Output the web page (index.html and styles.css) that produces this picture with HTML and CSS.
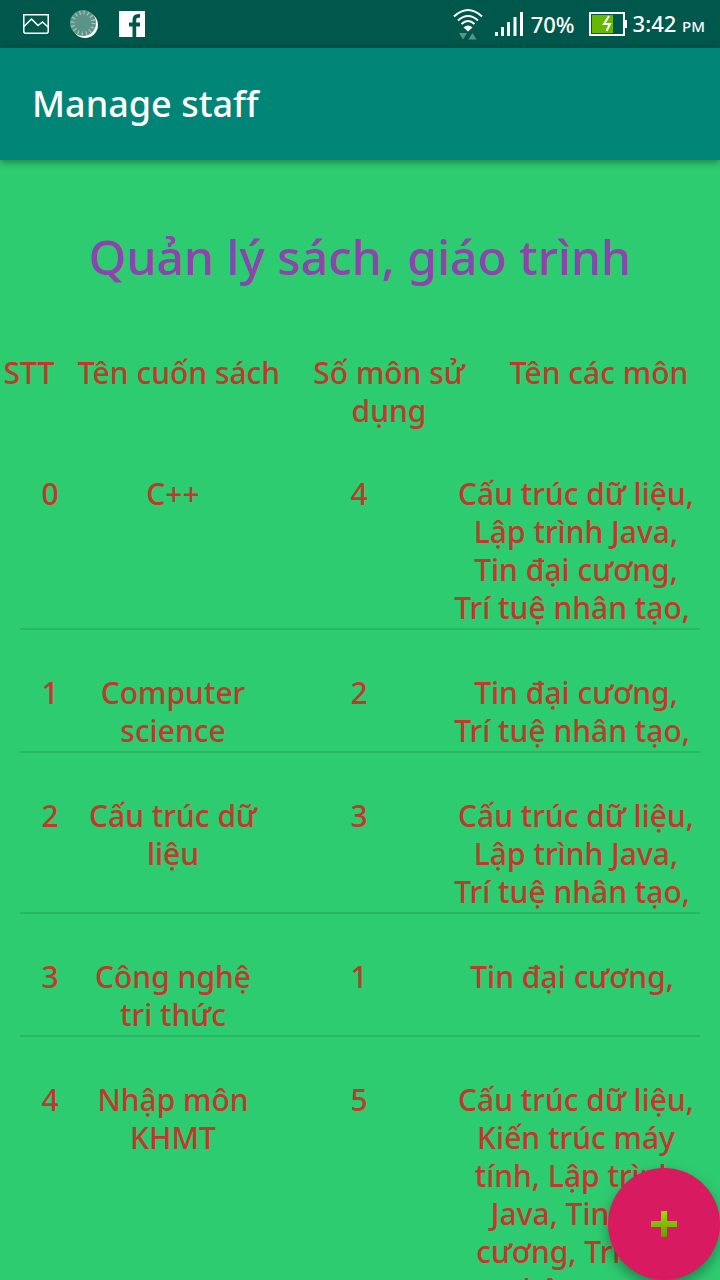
FILE: index.html
```
<!DOCTYPE html>
<html lang="vi">
<head>
<meta charset="utf-8">
<meta name="viewport" content="width=device-width, initial-scale=1">
<title>Manage staff</title>
<link rel="stylesheet" href="styles.css">
</head>
<body>
<div class="app">
  <div class="status-bar">
    <div class="status-group notifications">
      <svg width="26" height="20" viewBox="0 0 26 20" fill="none" stroke="#fff" aria-hidden="true">
        <path d="M.8.8h24.400v16.400q0 2-2 2H2.800q-2 0-2-2z" stroke-width="1.500"/>
        <path d="M1 12.500 8.500 5l6.500 6.500 4.500-3.500 5.500 5" stroke-width="1.500"/>
      </svg>
      <svg width="28" height="28" viewBox="0 0 28 28" aria-hidden="true">
        <circle cx="15" cy="15" r="13" fill="#fff"/>
        <circle cx="13" cy="13" r="13" fill="#5a9388"/>
        <circle cx="13" cy="13" r="10.500" fill="none" stroke="#a5c5bf" stroke-width="4" stroke-dasharray="1.200 2.940"/>
      </svg>
      <svg width="26" height="26" viewBox="0 0 26 26" aria-hidden="true">
        <path d="M0 0h26v26H0z" fill="#fff"/>
        <path d="M13.500 26V15.500H10v-4h3.500V9q0-6 6-6H21v3.800h-1.800q-2 0-2 2v2.700H21v4h-3.800V26z" fill="#00574b"/>
      </svg>
    </div>
    <div class="status-group system">
      <svg class="wifi" width="30" height="32" viewBox="0 0 30 32" fill="none" stroke="#fff" stroke-width="2" aria-hidden="true">
        <path d="M1 8.500q14-13 28 0M5 12.500q10-9 20 0M8.500 16q6.500-6 13 0"/>
        <path d="m15 23.500-4.500-4q4.500-4 9 0z" fill="#fff" stroke="none"/>
        <path d="M6 25h8l-4 6.500zM15.500 31.500h8l-4-6.500z" fill="#5a9388" stroke="none"/>
      </svg>
      <svg width="28" height="24" viewBox="0 0 28 24" fill="#fff" aria-hidden="true">
        <path d="M0 20h3v4H0zM6 15h3v9H6zM12 10h3v14h-3zM18.500 5h3v19h-3zM25 0h3v24h-3z"/>
      </svg>
      <span class="battery-level">70%</span>
      <svg class="battery" width="38" height="24" viewBox="0 0 38 24" aria-hidden="true">
        <path d="M1 1h34v22H1z" fill="none" stroke="#fff" stroke-width="2"/>
        <path d="M36 8h2v8h-2z" fill="#fff"/>
        <path d="M3 3h21v18H3z" fill="#66b800"/>
        <path d="m20 4-5 8h6l-3.500 7" fill="none" stroke="#fff" stroke-width="2"/>
      </svg>
      <span>3:42 <small class="meridiem">PM</small></span>
    </div>
  </div>
  <header class="app-bar"><h1 class="app-title">Manage staff</h1></header>
  <main class="content">
    <h2 class="page-title" id="page-title">Quản lý sách, giáo trình</h2>
    <table class="books" aria-labelledby="page-title">
      <thead>
        <tr class="head-row"><th>STT</th><th>Tên cuốn sách</th><th>Số môn sử dụng</th><th>Tên các môn</th></tr>
      </thead>
      <tbody>
        <tr class="book-row"><td>0</td><td>C++</td><td>4</td><td>Cấu trúc dữ liệu, Lập trình Java, <br>Tin đại cương, <br>Trí tuệ nhân tạo,&nbsp;</td></tr>
        <tr class="book-row"><td>1</td><td>Computer science</td><td>2</td><td>Tin đại cương, <br>Trí tuệ nhân tạo,&nbsp;</td></tr>
        <tr class="book-row"><td>2</td><td>Cấu trúc dữ liệu</td><td>3</td><td>Cấu trúc dữ liệu, Lập trình Java, <br>Trí tuệ nhân tạo,&nbsp;</td></tr>
        <tr class="book-row"><td>3</td><td>Công nghệ <br>tri thức</td><td>1</td><td>Tin đại cương,&nbsp;</td></tr>
        <tr class="book-row"><td>4</td><td>Nhập môn KHMT</td><td>5</td><td>Cấu trúc dữ liệu, Kiến trúc máy tính, Lập trình Java, Tin đại cương, Trí tuệ nhân tạo,&nbsp;</td></tr>
      </tbody>
    </table>
  </main>
  <button class="fab" type="button" aria-label="Thêm">
    <svg width="26" height="26" viewBox="0 0 26 26" aria-hidden="true">
      <defs><linearGradient id="plus-fill" x1="0" y1="0" x2="0" y2="1"><stop offset="0" stop-color="#99e000"/><stop offset="1" stop-color="#669900"/></linearGradient></defs>
      <path d="M10 0h6v10h10v6H16v10h-6V16H0v-6h10z" fill="url(#plus-fill)"/>
    </svg>
  </button>
</div>
</body>
</html>
```
FILE: styles.css
```
* {
  box-sizing: border-box;
}

body {
  margin: 0;
  font-family: "Noto Sans", "Open Sans", sans-serif;
  font-weight: 500;
  background: #2ecc71;
}

.app {
  position: relative;
  display: flex;
  flex-direction: column;
  height: 100vh;
  overflow: hidden;
}

.status-bar {
  flex: none;
  display: flex;
  justify-content: space-between;
  align-items: center;
  height: 48px;
  padding: 0 15px 0 23px;
  background: #00574b;
  color: #fff;
  font-size: 22px;
  line-height: 32px;
  white-space: nowrap;
}

.status-group {
  display: flex;
  align-items: center;
}

.notifications {
  gap: 21px;
}

.wifi {
  margin-right: 12px;
}

.battery-level {
  margin: 0 14px 0 8px;
}

.battery {
  margin-right: 6px;
}

.meridiem {
  font-size: 15px;
}

.app-bar {
  flex: none;
  z-index: 1;
  display: flex;
  align-items: center;
  height: 112px;
  padding: 0 32px;
  background: #008577;
  box-shadow: 0 2px 8px rgba(0, 0, 0, 0.4);
}

.app-title {
  margin: 0;
  color: #fff;
  font-size: 36px;
  font-weight: 500;
  line-height: 48px;
}

.content {
  flex: 1;
  min-height: 0;
  overflow-y: auto;
  scrollbar-width: none;
}

.page-title {
  margin: 63px 0;
  color: #8e44ad;
  font-size: 48px;
  font-weight: 500;
  line-height: 68px;
  text-align: center;
}

.books {
  display: block;
  color: #c0392b;
  font-size: 30px;
  line-height: 38px;
  text-align: center;
}

.books thead,
.books tbody {
  display: block;
}

.books tbody {
  padding-top: 1px;
}

.head-row,
.book-row {
  display: grid;
}

.head-row {
  grid-template-columns: 74px 1fr 1fr 1fr;
  padding-right: 16px;
}

.head-row th {
  padding: 0;
  font-weight: 500;
}

.head-row th:first-child {
  padding-right: 16px;
}

.book-row {
  grid-template-columns: 60px 3fr 3fr 4fr;
  margin: 0 20px;
  padding: 44px 0 1px;
  border-bottom: 2px solid #29b765;
}

.book-row td {
  padding: 0;
}

.fab {
  position: absolute;
  right: 0;
  bottom: 0;
  z-index: 2;
  display: flex;
  align-items: center;
  justify-content: center;
  width: 112px;
  height: 112px;
  padding: 0;
  border: 0;
  border-radius: 50%;
  background: #d81b60;
  box-shadow: 0 6px 14px rgba(0, 0, 0, 0.35);
}
```
